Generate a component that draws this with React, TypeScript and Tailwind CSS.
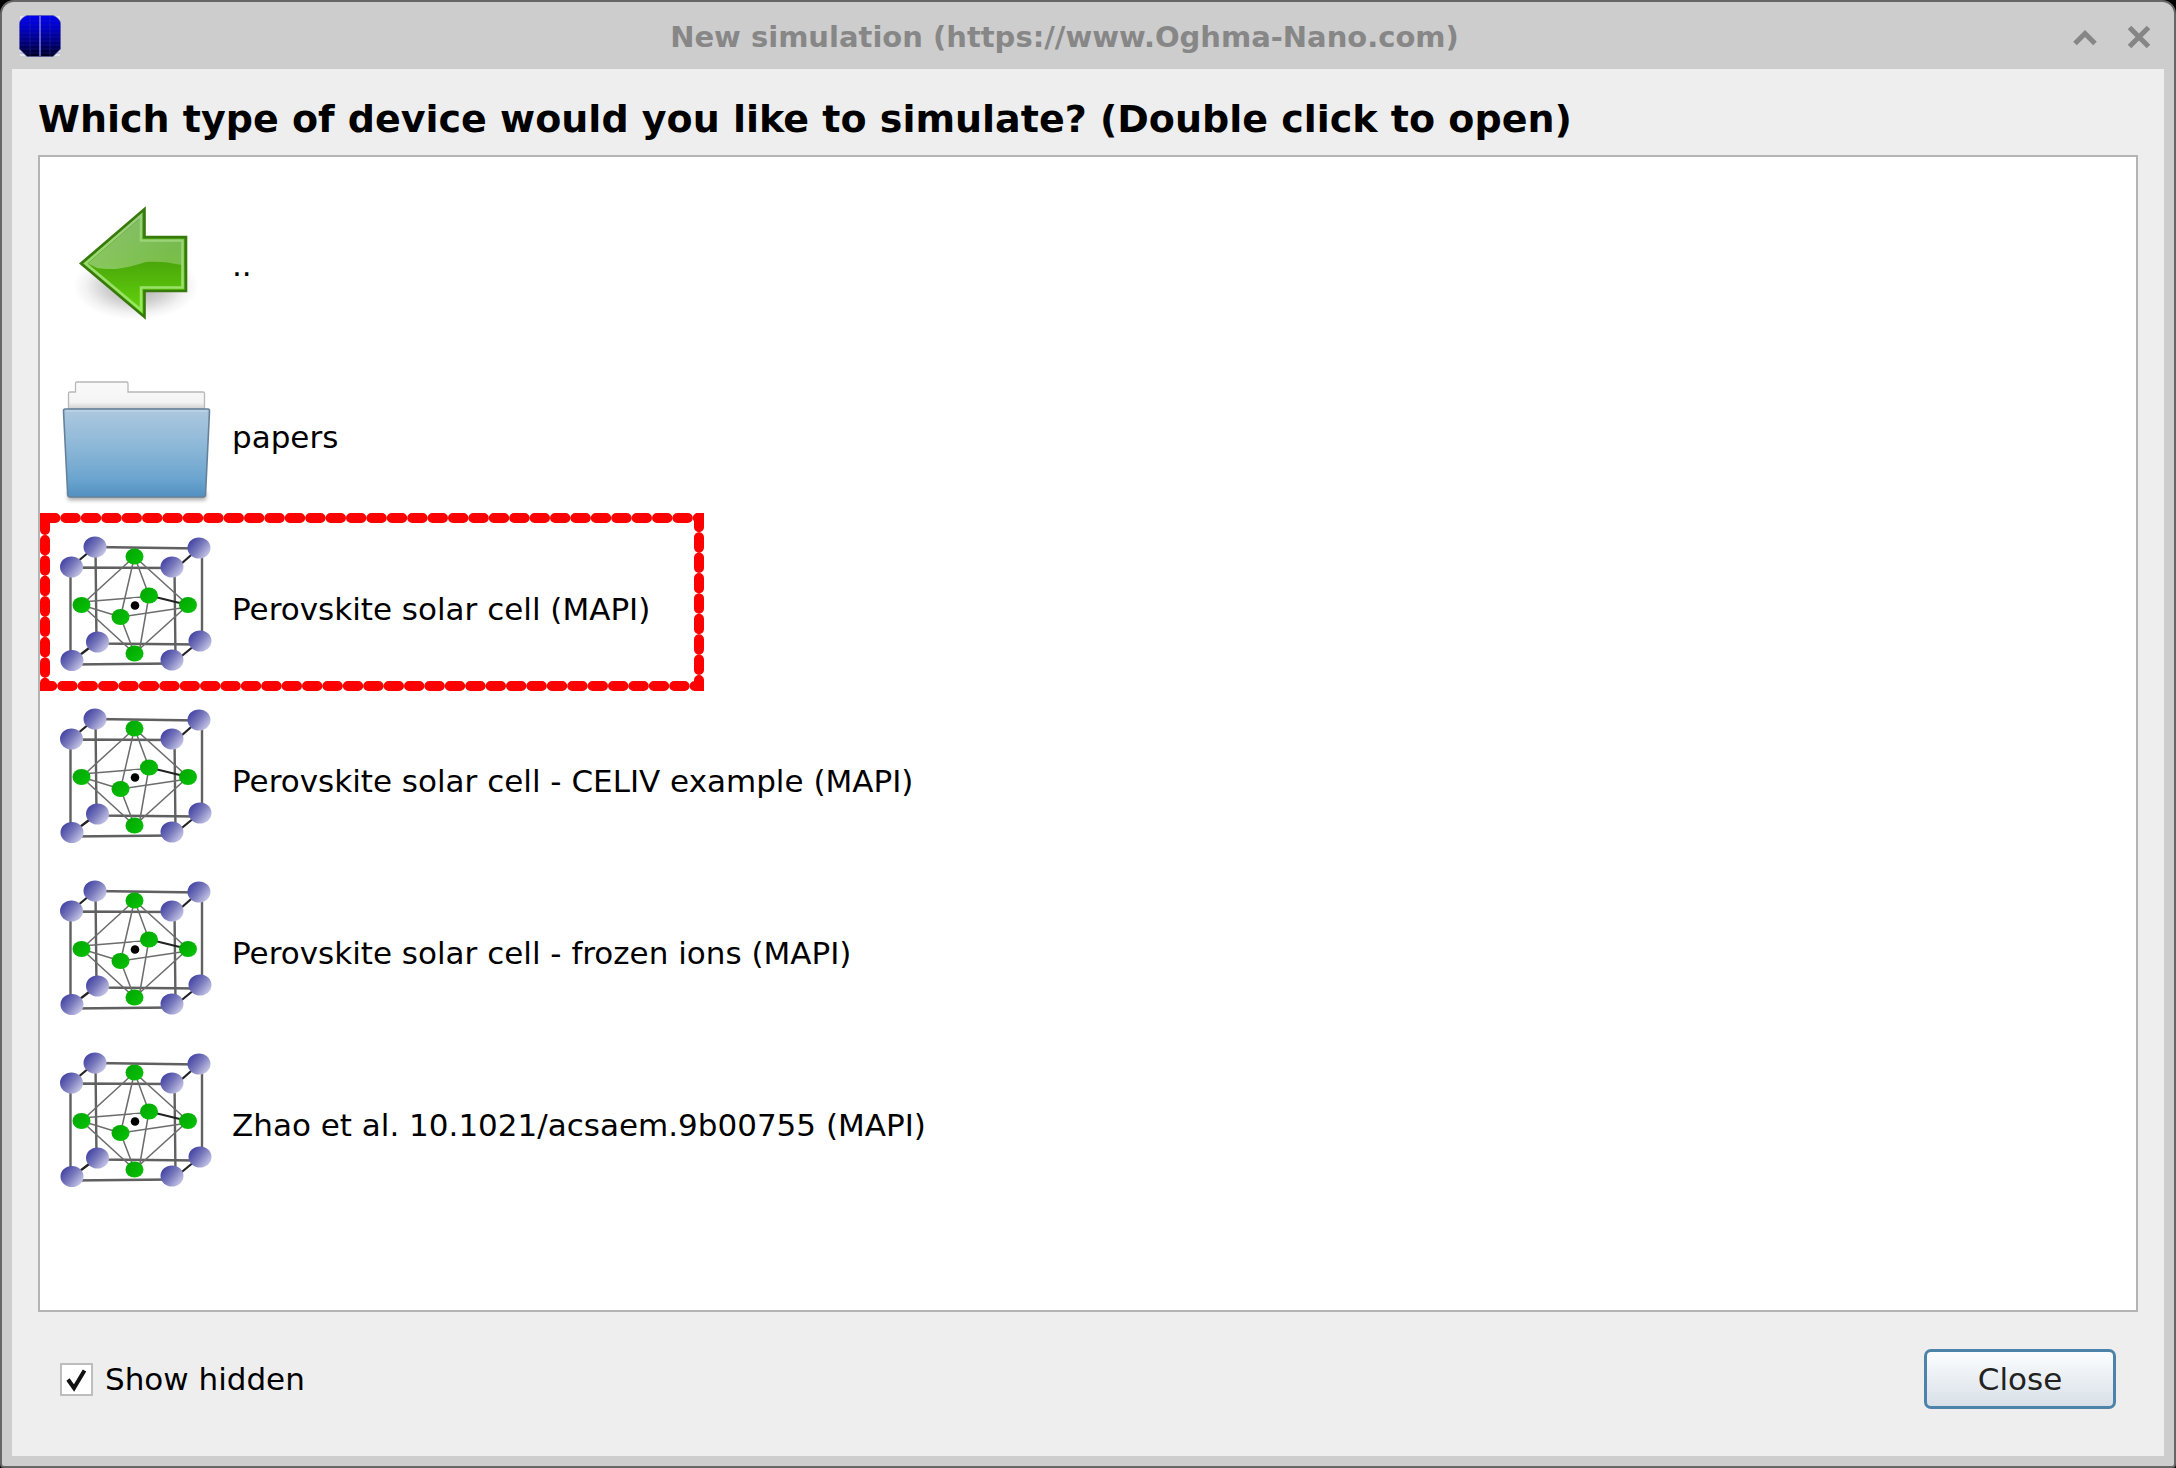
import React, { useState } from "react";

function AppIcon() {
  const lines = [6, 10, 14, 18, 22, 26, 30, 34, 38];
  return (
    <svg viewBox="0 0 42 42" className="size-[42px] shrink-0" aria-hidden="true">
      <defs>
        <linearGradient id="app-blue" x1="0" y1="0" x2="0" y2="1">
          <stop offset="0" stopColor="#0000f0" />
          <stop offset="0.3" stopColor="#0000c8" />
          <stop offset="0.7" stopColor="#000070" />
          <stop offset="1" stopColor="#000018" />
        </linearGradient>
      </defs>
      <path d="M1 1h7l-7 7zM41 1h-7l7 7zM1 41h7l-7-7zM41 41h-7l7-7z" fill="#e4e4ea" />
      <path d="M8 0.500H34Q37 1.500 39 3.500T41.500 8V34L34 41.500H8L0.500 34V8Q1 5.500 3 3.500T8 0.500Z" fill="url(#app-blue)" />
      <path d="M8 0.500H34Q37 1.500 39 3.500T41.500 8V34L34 41.500H8L0.500 34V8Q1 5.500 3 3.500T8 0.500Z" fill="none" stroke="#5555a8" strokeWidth="1" opacity="0.6" />
      {lines.map((y) => (
        <path key={y} d={`M1 ${y}H41`} stroke="#2424a0" strokeWidth="0.8" opacity="0.45" />
      ))}
      <path d="M11 1V41M31 1V41" stroke="#3030b0" strokeWidth="1" opacity="0.45" />
      <path d="M21 1V41" stroke="#7474d8" strokeWidth="1.600" />
    </svg>
  );
}

function BackArrow() {
  return (
    <svg viewBox="58 178 156 172" className="h-[172px] w-[156px] shrink-0" aria-hidden="true">
      <defs>
        <radialGradient id="arrow-shadow">
          <stop offset="0" stopColor="#000" stopOpacity="0.34" />
          <stop offset="0.5" stopColor="#000" stopOpacity="0.18" />
          <stop offset="0.8" stopColor="#000" stopOpacity="0.05" />
          <stop offset="1" stopColor="#000" stopOpacity="0" />
        </radialGradient>
        <linearGradient id="arrow-green" x1="0" y1="0" x2="0" y2="1">
          <stop offset="0" stopColor="#469c1e" />
          <stop offset="0.5" stopColor="#4ba80a" />
          <stop offset="1" stopColor="#66d80c" />
        </linearGradient>
        <linearGradient id="arrow-gloss" x1="0" y1="0" x2="1" y2="0.300">
          <stop offset="0" stopColor="#fff" stopOpacity="0.38" />
          <stop offset="1" stopColor="#fff" stopOpacity="0.26" />
        </linearGradient>
        <linearGradient id="arrow-rim" x1="0" y1="0" x2="0" y2="1">
          <stop offset="0" stopColor="#9ccb80" />
          <stop offset="1" stopColor="#98e860" />
        </linearGradient>
      </defs>
      <ellipse cx="136" cy="285" rx="63" ry="34" fill="url(#arrow-shadow)" />
      <path d="M81 262.500L144.500 208V236H186V290H144.500V316Z" fill="url(#arrow-green)" stroke="#38790c" strokeWidth="2.600" />
      <path d="M88 262.500L140 217.500V240H182V264C168 261 158 260 146 261C128 266 118 270 97 267Z" fill="url(#arrow-gloss)" />
      <path d="M85.500 262.500L141 214.500V239.500H182.500V286.500H141V309Z" fill="none" stroke="url(#arrow-rim)" strokeWidth="2.600" />
    </svg>
  );
}

function Folder() {
  return (
    <svg viewBox="58 350 156 172" className="h-[172px] w-[156px] shrink-0" aria-hidden="true">
      <defs>
        <linearGradient id="folder-front" x1="0" y1="0" x2="0" y2="1">
          <stop offset="0" stopColor="#adc8df" />
          <stop offset="0.4" stopColor="#8fb9d8" />
          <stop offset="0.8" stopColor="#6ba4cf" />
          <stop offset="1" stopColor="#5290c0" />
        </linearGradient>
        <linearGradient id="folder-back" x1="0" y1="0" x2="0" y2="1">
          <stop offset="0" stopColor="#fafafa" />
          <stop offset="0.75" stopColor="#f4f4f4" />
          <stop offset="1" stopColor="#cfcfcf" />
        </linearGradient>
        <filter id="folder-blur" x="-10%" y="-100%" width="120%" height="300%">
          <feGaussianBlur stdDeviation="2" />
        </filter>
      </defs>
      <rect x="68" y="491" width="138" height="8" fill="#000" opacity="0.35" filter="url(#folder-blur)" />
      <path d="M68.500 408V392Q68.500 391 70 391H75.500V382.500Q75.500 381 77 381H126.500Q128 381 128 382.500V391H203Q204.500 391 204.500 392.500V408Z" fill="url(#folder-back)" stroke="#b8b8b8" strokeWidth="1.300" />
      <path d="M65 408H208Q209.500 408 209.500 410L205.500 494Q205.300 496 203.500 496H69.500Q68 496 67.700 494L63.500 410Q63.500 408 65 408Z" fill="url(#folder-front)" stroke="#66809a" strokeWidth="1.600" />
      <path d="M66 410H207" stroke="#c4d9e9" strokeWidth="1.200" />
    </svg>
  );
}

const blueAtoms = [
  [95, 546], [199, 547], [71.5, 566], [172, 566],
  [97.5, 641], [200, 640], [72, 659.5], [172, 659],
];
const greenAtoms = [
  [134.5, 555.5], [81.5, 604], [188, 604],
  [149, 594.5], [120.5, 616], [134.5, 652.5],
];

function Crystal() {
  return (
    <svg viewBox="58 522 156 172" className="h-[172px] w-[156px] shrink-0" aria-hidden="true">
      <defs>
        <linearGradient id="atom-blue" x1="0.1" y1="0.25" x2="0.9" y2="0.85">
          <stop offset="0" stopColor="#4848a6" />
          <stop offset="0.45" stopColor="#7878bc" />
          <stop offset="1" stopColor="#c8c8e8" />
        </linearGradient>
        <linearGradient id="atom-green" x1="0" y1="0" x2="1" y2="1">
          <stop offset="0" stopColor="#00a400" />
          <stop offset="1" stopColor="#08c408" />
        </linearGradient>
      </defs>
      <g fill="none" stroke="#606060" strokeWidth="2.400">
        <path d="M95 546L199 547.500M202 547V640M200 643.500L97 642.500M96.500 642L95.500 546" />
        <path d="M71 566.500L172 567M174.500 566L175.500 659M172 662.500L72 663.500M70.500 660V566" />
        <path d="M95 546L71 566M199 547L172 571M97 641L72 660M200 640L172 663" stroke="#222" strokeWidth="2.200" />
      </g>
      <g fill="none" stroke="#6c6c6c" strokeWidth="1.500">
        <path d="M134.500 555.500L81.500 604L134.500 652.500L188 604Z" />
        <path d="M134.500 555.500L149 594.500L139 652M134.500 555.500L120.500 616L134.500 652.500" />
        <path d="M81.500 601L149 595.500M81.500 604L120.500 616L188 606" />
        <path d="M149 594.500L188 604" stroke="#222" strokeWidth="2" />
      </g>
      {blueAtoms.map(([x, y]) => (
        <ellipse key={`${x}-${y}`} cx={x} cy={y} rx="11.500" ry="10.500" fill="url(#atom-blue)" />
      ))}
      {greenAtoms.map(([x, y]) => (
        <ellipse key={`${x}-${y}`} cx={x} cy={y} rx="9" ry="8" fill="url(#atom-green)" />
      ))}
      <circle cx="135" cy="604.500" r="7.500" fill="#fff" />
      <circle cx="135" cy="604.500" r="4.300" fill="#000" />
    </svg>
  );
}

function Highlight() {
  return (
    <svg viewBox="0 0 664 178" className="pointer-events-none absolute -top-[10px] left-0 h-[178px] w-[664px]" aria-hidden="true">
      <path
        d="M5 5H659V173H5Z"
        fill="none"
        stroke="#ff0000"
        strokeWidth="10"
        strokeLinecap="round"
        strokeDasharray="10.400 10"
      />
      <path d="M0 0H8V8H0ZM656 0H664V8H656ZM656 170H664V178H656ZM0 170H8V178H0Z" fill="#ff0000" />
    </svg>
  );
}

const entries = [
  { name: "..", Icon: BackArrow },
  { name: "papers", Icon: Folder },
  { name: "Perovskite solar cell (MAPI)", Icon: Crystal, marked: true },
  { name: "Perovskite solar cell - CELIV example (MAPI)", Icon: Crystal },
  { name: "Perovskite solar cell - frozen ions (MAPI)", Icon: Crystal },
  { name: "Zhao et al. 10.1021/acsaem.9b00755 (MAPI)", Icon: Crystal },
];

export default function App() {
  const [showHidden, setShowHidden] = useState(true);
  return (
    <div className="flex min-h-screen bg-black font-['DejaVu_Sans',sans-serif] text-[31px] leading-[40px] text-black">
      <div className="flex grow flex-col rounded-t-[14px] rounded-b-[4px] border-2 border-[#666666] bg-[#cdcdcd] px-[10px] pb-[10px]">
        <header className="flex h-[67px] items-center pl-[7px]">
          <AppIcon />
          <h1 className="grow pt-0.5 text-center text-[29px] font-bold text-[#878787]">
            New simulation (https://www.Oghma-Nano.com)
          </h1>
          <div className="flex items-center gap-5 pt-0.5 pr-2">
            <button type="button" aria-label="Roll up" className="p-[5px]">
              <svg viewBox="0 0 24 24" className="size-6" fill="none" stroke="#868686" strokeWidth="5">
                <path d="M2 18.500L12 8.500L22 18.500" />
              </svg>
            </button>
            <button type="button" aria-label="Close window" className="p-[5px]">
              <svg viewBox="0 0 24 24" className="size-6" fill="none" stroke="#868686" strokeWidth="5">
                <path d="M2.500 2.500L21.500 21.500M21.500 2.500L2.500 21.500" />
              </svg>
            </button>
          </div>
        </header>
        <main className="flex grow flex-col bg-[#eeeeee] px-[26px]">
          <h2 className="flex h-[86px] items-center pt-3.5 text-[38px] font-bold">
            Which type of device would you like to simulate? (Double click to open)
          </h2>
          <ul className="grow border-2 border-[#b4b4b4] bg-white pt-[22px]">
            {entries.map(({ name, Icon, marked }) => (
              <li key={name} className="relative">
                <button type="button" className="flex items-center pl-[18px] text-left">
                  <Icon />
                  <span className="pl-[18px]">{name}</span>
                </button>
                {marked && <Highlight />}
              </li>
            ))}
          </ul>
          <footer className="flex h-[144px] items-center justify-between pr-[22px] pb-2.5 pl-[22px]">
            <label className="flex items-center gap-3">
              <span className="relative flex">
                <input
                  type="checkbox"
                  checked={showHidden}
                  onChange={(e) => setShowHidden(e.target.checked)}
                  className="size-[33px] appearance-none border-2 border-[#bdbdbd] bg-white"
                />
                {showHidden && (
                  <svg viewBox="0 0 33 33" className="pointer-events-none absolute inset-0 size-[33px]" aria-hidden="true">
                    <path d="M8 16.500L14 25L24.500 7.500" fill="none" stroke="#111" strokeWidth="4" />
                  </svg>
                )}
              </span>
              Show hidden
            </label>
            <button
              type="button"
              className="h-[60px] w-48 rounded-[7px] border-[3px] border-[#4d83a8] bg-linear-to-b from-[#fcfdfe] to-[#d8e0e7] text-[#222222]"
            >
              Close
            </button>
          </footer>
        </main>
      </div>
    </div>
  );
}
